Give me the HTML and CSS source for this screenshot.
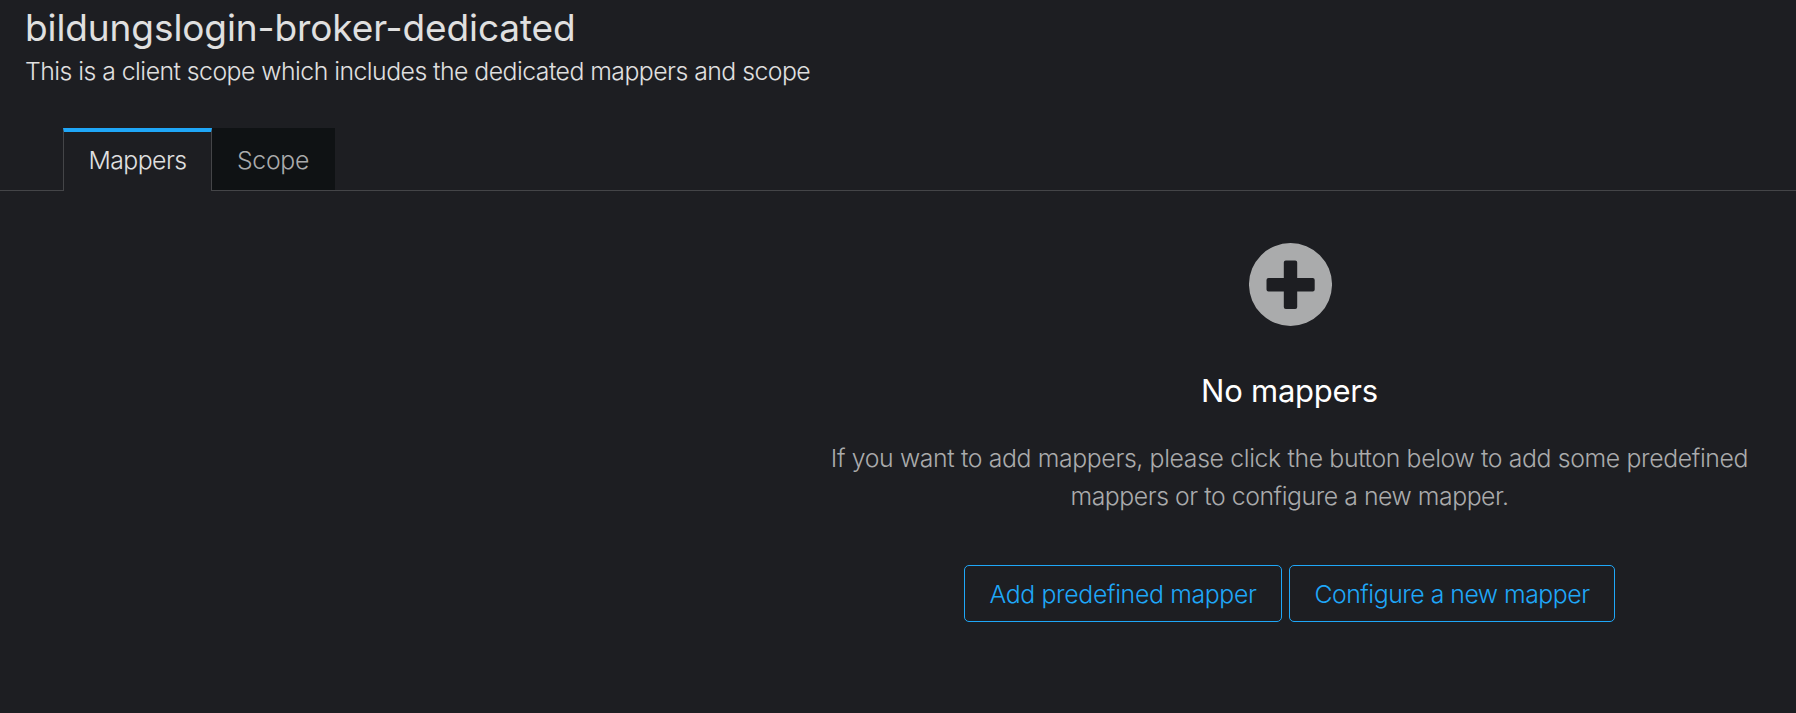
FILE: index.html
```html
<!DOCTYPE html>
<html lang="en">
<head>
<meta charset="utf-8">
<title>Dedicated scope</title>
<link rel="stylesheet" href="styles.css">
</head>
<body>
<header class="page-header">
  <h1 class="page-title">bildungslogin-broker-dedicated</h1>
  <p class="page-subtitle">This is a client scope which includes the dedicated mappers and scope</p>
</header>
<nav class="tabs">
  <button class="tab tab-active">Mappers</button>
  <button class="tab tab-scope">Scope</button>
</nav>
<main class="empty-state">
  <svg class="empty-icon" viewBox="0 0 83 83" aria-hidden="true">
    <path fill="#aaabac" fill-rule="evenodd" d="M41.5 0a41.5 41.5 0 1 1 0 83a41.5 41.5 0 1 1 0-83zM36.8 17.500a2 2 0 0 0-2 2V35H19.500a2 2 0 0 0-2 2v9.400a2 2 0 0 0 2 2H34.800v15.500a2 2 0 0 0 2 2h9.400a2 2 0 0 0 2-2V48.400h15.500a2 2 0 0 0 2-2V37a2 2 0 0 0-2-2H48.200V19.500a2 2 0 0 0-2-2z"/>
  </svg>
  <h2 class="empty-title">No mappers</h2>
  <p class="empty-body">If you want to add mappers, please click the button below to add some predefined<br><span class="line-two">mappers or to configure a new mapper.</span></p>
  <div class="actions">
    <button class="btn btn-add">Add predefined mapper</button>
    <button class="btn btn-configure">Configure a new mapper</button>
  </div>
</main>
</body>
</html>
```
FILE: styles.css
```css
* { box-sizing: border-box; }
body {
  margin: 0;
  height: 713px;
  overflow: hidden;
  background: #1d1e22;
  color: #e0e0e0;
  font: 300 24.8px/38px Inter, "Liberation Sans", sans-serif;
}
.page-header { height: 128px; padding: 4px 25px 0; white-space: nowrap; }
.page-title { margin: 0; font-size: 37px; line-height: 48px; font-weight: 400; letter-spacing: -0.1px; }
.page-subtitle { margin: 0; line-height: 38px; letter-spacing: -0.53px; }
.tabs { display: flex; height: 63px; padding-left: 63px; border-bottom: 1px solid #444548; }
.tab { height: 62px; padding: 2px 1px 0 0; border: 0; background: #0f1214; color: #aaabac; font: inherit; letter-spacing: -0.3px; }
.tab-active { width: 149px; height: 63px; padding: 0 0 3px; border: 1px solid #444548; border-top: 4px solid #1fa7f8; border-bottom: 0; background: #1d1e22; color: #e0e0e0; letter-spacing: -0.55px; }
.tab-scope { width: 123px; }
.empty-state { display: flex; flex-direction: column; align-items: center; width: 1011px; margin-left: 784px; padding-top: 52px; text-align: center; }
.empty-icon { width: 83px; height: 83px; margin-left: 1px; }
.empty-title { margin: 44px 0 0; font-size: 31px; line-height: 42px; font-weight: 400; letter-spacing: -0.25px; color: #fff; }
.empty-body { margin: 27px 0 0; color: #aaabac; white-space: nowrap; letter-spacing: -0.36px; }
.line-two { letter-spacing: -0.45px; }
.actions { display: flex; gap: 7px; margin-top: 50px; }
.btn { height: 57px; padding: 0; border: 1px solid #1fa7f8; border-radius: 5px; background: none; color: #1fa7f8; font: inherit; }
.btn-add { width: 318px; letter-spacing: -0.33px; }
.btn-configure { width: 326px; letter-spacing: -0.48px; }
```
